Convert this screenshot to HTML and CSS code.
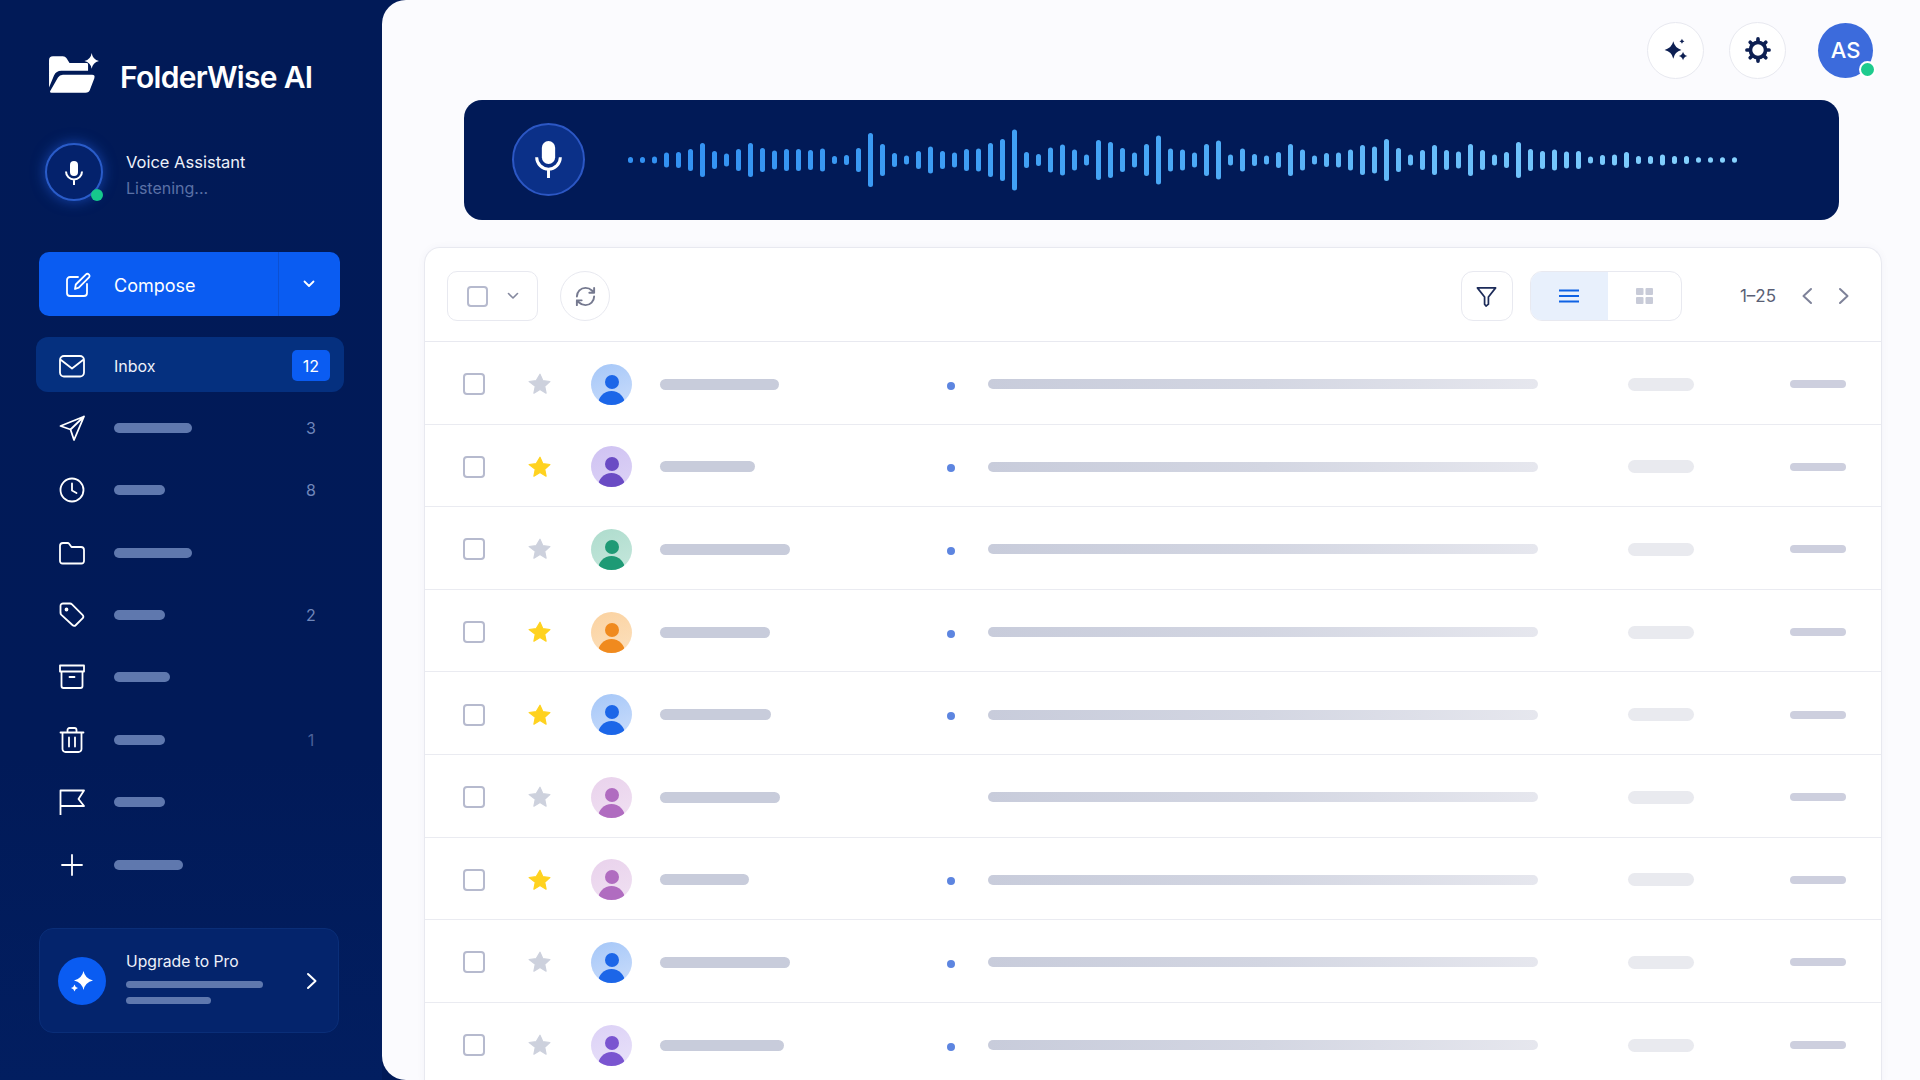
FILE: index.html
```html
<!DOCTYPE html>
<html lang="en">
<head>
<meta charset="utf-8">
<title>FolderWise AI</title>
<link rel="stylesheet" href="styles.css">
</head>
<body>
<svg class="defs" aria-hidden="true"><symbol id="star" viewBox="0 0 24 24"><path d="M12 2.2l2.9 6.5 7 .8-5.2 4.7 1.4 7-6.1-3.6-6.1 3.6 1.4-7L1.100 9.500l7-.8z" stroke="currentColor" stroke-width="1.200" stroke-linejoin="round" fill="currentColor"/></symbol></svg>
<aside class="sidebar">
  <div class="brand">
    <svg class="brand-icon" viewBox="145 155 160 130"><path fill="#fff" d="M148 180Q148 168 160 168H190Q197 168 201 174L210 188H262Q266 188 266 192V212H185Q170 212 163 226L148 262Z"/><path fill="#fff" d="M190 224H278Q288 224 285 234L272 268Q269 278 258 278H155Q149 278 152 272L175 232Q180 224 190 224Z"/><path fill="#fff" d="M277 158Q280 178 299 182Q280 186 277 206Q274 186 255 182Q274 178 277 158Z"/></svg>
    <span class="brand-name">FolderWise AI</span>
  </div>
  <div class="voice">
    <div class="voice-orb">
      <svg class="mic-sm" viewBox="3 0 18 25"><rect x="8" y="1" width="8" height="15" rx="4" fill="#fff"/><path d="M4 11.500a8 8 0 0 0 16 0M12 19.500V25" fill="none" stroke="#fff" stroke-width="2"/></svg>
      <span class="orb-dot"></span>
    </div>
    <div class="voice-text"><div class="voice-title">Voice Assistant</div><div class="voice-sub">Listening...</div></div>
  </div>
  <div class="compose">
    <div class="compose-main">
      <svg class="ico" viewBox="0 0 26 26"><path d="M13 5H5a3 3 0 0 0-3 3v13a3 3 0 0 0 3 3h14a3 3 0 0 0 3-3v-9"/><path d="M10 17l.8-4.500L21 2.300a1.900 1.900 0 0 1 2.700 0l.3.300a1.900 1.900 0 0 1 0 2.700L13.800 15.600z"/></svg>
      <span>Compose</span>
    </div>
    <div class="compose-more"><svg class="chev" viewBox="0 0 12 8"><path d="M1.500 1.500L6 6l4.500-4.500"/></svg></div>
  </div>
  <nav class="nav">
    <div class="nav-item active">
      <svg class="ico" viewBox="0 0 26 26"><rect x="1" y="3" width="24" height="20.500" rx="4"/><path d="M2 7l11 8.500L24 7"/></svg>
      <span class="nav-label">Inbox</span><span class="badge">12</span>
    </div>
    <div class="nav-item">
      <svg class="ico" viewBox="0 0 26 26"><path d="M1.500 11L25 1.500 15 25l-3.500-10.500zM11.500 14.500L25 1.500"/></svg>
      <span class="bar w78"></span><span class="count">3</span>
    </div>
    <div class="nav-item">
      <svg class="ico" viewBox="0 0 26 26"><circle cx="13" cy="13" r="11.500"/><path d="M13 6.500V13.500l4.500 2.500"/></svg>
      <span class="bar w51"></span><span class="count">8</span>
    </div>
    <div class="nav-item">
      <svg class="ico" viewBox="0 0 26 26"><path d="M1 6a3 3 0 0 1 3-3h4.500a2 2 0 0 1 1.600.8L12.500 7H22a3 3 0 0 1 3 3v11a2.500 2.500 0 0 1-2.500 2.500h-19A2.500 2.500 0 0 1 1 21z"/></svg>
      <span class="bar w78"></span>
    </div>
    <div class="nav-item">
      <svg class="ico" viewBox="0 0 26 26"><path d="M1.500 4a2.500 2.500 0 0 1 2.500-2.500h7a3 3 0 0 1 2 .9l10.500 10.500a2.500 2.500 0 0 1 0 3.500l-6.600 6.600a2.500 2.500 0 0 1-3.500 0L2.400 12.900a3 3 0 0 1-.9-2z"/><circle cx="7.500" cy="7.500" r="1" fill="#fff"/></svg>
      <span class="bar w51"></span><span class="count">2</span>
    </div>
    <div class="nav-item">
      <svg class="ico" viewBox="0 0 26 26"><path d="M1 1.500h24v6H1zM2.500 7.500V22a2 2 0 0 0 2 2h17a2 2 0 0 0 2-2V7.500M10.500 13h5"/></svg>
      <span class="bar w56"></span>
    </div>
    <div class="nav-item">
      <svg class="ico" viewBox="0 0 26 26"><path d="M1.500 5.500h23M8.500 5.500V3a2 2 0 0 1 2-2h5a2 2 0 0 1 2 2v2.500M3.500 5.500V22a3 3 0 0 0 3 3h13a3 3 0 0 0 3-3V5.500M10 10.500v9M16 10.500v9"/></svg>
      <span class="bar w51"></span><span class="count dim">1</span>
    </div>
    <div class="nav-item">
      <svg class="ico" viewBox="0 0 26 26"><path d="M1.500 26V1.500H25l-5.500 8.500L25 17H1.500"/></svg>
      <span class="bar w51"></span>
    </div>
    <div class="nav-item">
      <svg class="ico" viewBox="0 0 26 26"><path d="M13 3v20M3 13h20"/></svg>
      <span class="bar w69"></span>
    </div>
  </nav>
  <div class="upgrade">
    <div class="up-orb"><svg class="up-star" viewBox="0 0 24 24"><path fill="#fff" d="M13.500 2q1.500 7.500 9.500 9.500-8 2-9.500 9.500-1.500-7.500-9.500-9.500 8-2 9.500-9.500zM4.500 15.500q.6 3 3.500 3.500-2.900.6-3.500 3.500Q3.900 19.600 1 19q2.900-.5 3.500-3.500z"/></svg></div>
    <div class="up-text">
      <div class="up-title">Upgrade to Pro</div>
      <div class="up-bar one"></div>
      <div class="up-bar two"></div>
    </div>
    <svg class="up-chev" viewBox="0 0 12 18"><path d="M2 2l7.500 7L2 16"/></svg>
  </div>
</aside>
<main class="main">
  <div class="top">
    <div class="round">
      <svg class="top-ico" viewBox="0 0 24 24"><path fill="#0d1f52" d="M9.500 4q1.300 6 7.500 8-6.200 1.500-7.500 8Q8.200 13.500 1.500 12 8.200 10 9.500 4zM18.500 13.500q.7 3.100 4 4-3.300.8-4 4-.7-3.200-4-4 3.300-.9 4-4zM17.500 1.500q.4 1.900 2.300 2.400-1.900.5-2.300 2.400-.4-1.900-2.300-2.400 1.900-.5 2.300-2.400z"/></svg>
    </div>
    <div class="round gear">
      <svg class="top-ico" viewBox="0 0 24 24"><path fill="none" stroke="#0d1f52" stroke-width="3.400" d="M12 5a7 7 0 1 0 0 14 7 7 0 0 0 0-14z"/><path fill="none" stroke="#0d1f52" stroke-width="3.400" stroke-linecap="round" d="M12 1.800v2M12 20.200v2M1.800 12h2M20.200 12h2M4.800 4.800l1.400 1.400M17.800 17.800l1.400 1.400M4.800 19.200l1.400-1.400M17.800 6.200l1.400-1.400"/></svg>
    </div>
    <div class="me">AS<span class="me-dot"></span></div>
  </div>
  <section class="wavebar">
    <div class="wave-orb"><svg class="mic-lg" viewBox="3 0 18 25"><rect x="7.500" y="0" width="9" height="15.500" rx="4.500" fill="#fff"/><path d="M4 11a8 8 0 0 0 16 0M12 19V25" fill="none" stroke="#fff" stroke-width="2"/></svg></div>
    <svg class="wave" viewBox="0 0 1110 70">
      <defs><linearGradient id="wg" gradientUnits="userSpaceOnUse" x1="0" y1="0" x2="1110" y2="0"><stop offset="0" stop-color="#3190f2"/><stop offset=".45" stop-color="#45a5f5"/><stop offset="1" stop-color="#88d4ff"/></linearGradient></defs>
      <path fill="none" stroke="url(#wg)" stroke-width="5" stroke-linecap="round" d="M2.500 34.500v1M14.500 34.500v1M26.500 34v2M38.500 30v10M50.500 29.500v11M62.500 26.500v17M74.500 20.500v29M86.500 28.500v13M98.500 31v8M110.500 26.500v17M122.500 20.500v29M134.500 25.500v19M146.500 28v14M158.500 26.500v17M170.500 26.500v17M182.500 27.500v15M194.500 26v18M206.500 33.500v3M218.500 32.500v5M230.500 25.500v19M242.500 10.500v49M254.500 21.500v27M266.500 30.500v9M278.500 33v4M290.500 28.500v13M302.500 24v22M314.500 28.500v13M326.500 30v10M338.500 26.500v17M350.500 26v18M362.500 20.500v29M374.500 16.500v37M386.500 7v56M398.500 29.500v11M410.500 31.500v7M422.500 25v20M434.500 22v26M446.500 27v16M458.500 32v6M470.500 17.500v35M482.500 19.500v31M494.500 25.500v19M506.500 30v10M518.500 21.500v27M530.500 13v44M542.500 26v18M554.500 27v16M566.500 30v10M578.500 21.500v27M590.500 18v34M602.500 32v6M614.500 26v18M626.500 31.500v7M638.500 33v4M650.500 29.500v11M662.500 21.500v27M674.500 27v16M686.500 33v4M698.500 30.500v9M710.500 30v10M722.500 27v16M734.500 22.500v25M746.500 24v22M758.500 16.500v37M770.500 25.500v19M782.500 32v6M794.500 27.500v15M806.500 22.500v25M818.500 27.500v15M830.500 29v12M842.500 21.500v27M854.500 27.500v15M866.500 32v6M878.500 29.500v11M890.500 19.500v31M902.500 26.500v17M914.500 28.500v13M926.500 27v16M938.500 29v12M950.500 28.500v13M962.500 34v2M974.500 32.500v5M986.500 32v6M998.500 29.500v11M1010.500 33.500v3M1022.500 33.500v3M1034.500 32v6M1046.500 33.500v3M1058.500 33.500v3M1070.500 34.800v.4M1082.500 34.800v.4M1094.500 34.800v.4M1106.500 34.800v.4"/>
    </svg>
  </section>
  <section class="card">
    <div class="toolbar">
      <div class="select"><span class="box"></span><svg class="mini-chev" viewBox="0 0 12 8"><path d="M1.500 1.500L6 6l4.500-4.500"/></svg></div>
      <div class="refresh"><svg class="refresh-ico" viewBox="0 0 24 24"><path d="M3 12a9 9 0 0 1 9-9 9.750 9.750 0 0 1 6.740 2.740L21 8M21 3v5h-5M21 12a9 9 0 0 1-9 9 9.750 9.750 0 0 1-6.740-2.740L3 16M8 16H3v5"/></svg></div>
      <div class="spacer"></div>
      <div class="filter"><svg class="filter-ico" viewBox="0 0 24 24"><path d="M2.500 3h19l-7.500 9.500V20l-2.500 2H11.500L10 20v-7.500z"/></svg></div>
      <div class="toggle">
        <div class="seg on"><svg class="seg-ico" viewBox="0 0 20 14"><path d="M0 1.500h20M0 7h20M0 12.500h20"/></svg></div>
        <div class="seg"><svg class="seg-grid" viewBox="0 0 17 16"><rect width="7.500" height="7" rx="1"/><rect x="9.500" width="7.500" height="7" rx="1"/><rect y="9" width="7.500" height="7" rx="1"/><rect x="9.500" y="9" width="7.500" height="7" rx="1"/></svg></div>
      </div>
      <span class="range">1–25</span>
      <svg class="pg first" viewBox="0 0 12 18"><path d="M10 2L2.500 9l7.500 7"/></svg>
      <svg class="pg" viewBox="0 0 12 18"><path d="M2 2l7.500 7L2 16"/></svg>
    </div>
    <div class="row"><span class="box cb"></span><svg class="star"><use href="#star"/></svg><div class="av blue"></div><div class="name n119"></div><span class="dot"></span><div class="long"></div><div class="pill"></div><div class="end"></div></div>
    <div class="row"><span class="box cb"></span><svg class="star gold"><use href="#star"/></svg><div class="av purple"></div><div class="name n95"></div><span class="dot"></span><div class="long"></div><div class="pill"></div><div class="end"></div></div>
    <div class="row"><span class="box cb"></span><svg class="star"><use href="#star"/></svg><div class="av green"></div><div class="name n130"></div><span class="dot"></span><div class="long"></div><div class="pill"></div><div class="end"></div></div>
    <div class="row"><span class="box cb"></span><svg class="star gold"><use href="#star"/></svg><div class="av orange"></div><div class="name n110"></div><span class="dot"></span><div class="long"></div><div class="pill"></div><div class="end"></div></div>
    <div class="row"><span class="box cb"></span><svg class="star gold"><use href="#star"/></svg><div class="av blue"></div><div class="name n111"></div><span class="dot"></span><div class="long"></div><div class="pill"></div><div class="end"></div></div>
    <div class="row"><span class="box cb"></span><svg class="star"><use href="#star"/></svg><div class="av pink"></div><div class="name n120"></div><span class="dot none"></span><div class="long"></div><div class="pill"></div><div class="end"></div></div>
    <div class="row"><span class="box cb"></span><svg class="star gold"><use href="#star"/></svg><div class="av pink"></div><div class="name n89"></div><span class="dot"></span><div class="long"></div><div class="pill"></div><div class="end"></div></div>
    <div class="row"><span class="box cb"></span><svg class="star"><use href="#star"/></svg><div class="av blue"></div><div class="name n130"></div><span class="dot"></span><div class="long"></div><div class="pill"></div><div class="end"></div></div>
    <div class="row"><span class="box cb"></span><svg class="star"><use href="#star"/></svg><div class="av violet"></div><div class="name n124"></div><span class="dot"></span><div class="long"></div><div class="pill"></div><div class="end"></div></div>
  </section>
</main>
</body>
</html>
```
FILE: styles.css
```css
* { box-sizing: border-box; }
html, body { margin: 0; height: 100%; overflow: hidden; }
body {
  display: flex;
  background: #011a57;
  font-family: Inter, "Noto Sans", sans-serif;
}
.defs { width: 0; height: 0; position: absolute; }

/* sidebar */
.sidebar {
  width: 382px;
  flex: none;
  height: 1080px;
  padding: 52px 42px 0 39px;
  background: linear-gradient(180deg, #011a57 0%, #011a58 70%, #021e60 100%);
}
.brand { display: flex; align-items: center; height: 43px; margin-left: 9px; }
.brand-icon { width: 53px; height: 43px; flex: none; }
.brand-name {
  margin-left: 19px;
  margin-top: 6px;
  font-size: 30px;
  font-weight: 600;
  letter-spacing: -0.7px;
  color: #fff;
}
.voice { display: flex; align-items: center; margin: 48px 0 0 6px; height: 58px; }
.voice-orb {
  position: relative;
  width: 58px;
  height: 58px;
  border-radius: 50%;
  border: 2px solid #2a5cc9;
  background: #04226c;
  box-shadow: 0 0 14px rgba(42, 104, 240, .55);
  display: flex;
  align-items: center;
  justify-content: center;
}
.mic-sm { width: 18px; height: 25px; }
.orb-dot {
  position: absolute;
  right: -2px;
  bottom: -2px;
  width: 12px;
  height: 12px;
  border-radius: 50%;
  background: #16c88c;
}
.voice-text { margin-left: 23px; padding-top: 5px; }
.voice-title { font-size: 16.500px; line-height: 20px; color: #eef1fa; }
.voice-sub { font-size: 16px; line-height: 20px; margin-top: 6px; color: #5b71a6; }

.compose {
  display: flex;
  width: 301px;
  height: 64px;
  margin-top: 51px;
  border-radius: 10px;
  background: #0a5cf2;
  color: #fff;
  font-size: 18px;
}
.compose-main {
  width: 240px;
  display: flex;
  align-items: center;
  gap: 23px;
  padding: 2px 0 0 26px;
  border-right: 1px solid #0c50d2;
}
.compose-more { flex: 1; display: flex; align-items: center; justify-content: center; }
.chev { width: 12px; height: 8px; fill: none; stroke: #fff; stroke-width: 1.800; stroke-linecap: round; stroke-linejoin: round; margin-left: -2px; }
.ico { width: 26px; height: 26px; flex: none; fill: none; stroke: #fff; stroke-width: 1.800; stroke-linecap: round; stroke-linejoin: round; }

.nav { display: flex; flex-direction: column; gap: 7.400px; margin: 21px -4px 0 -3px; width: 308px; }
.nav-item {
  display: flex;
  align-items: center;
  height: 55px;
  padding: 2px 14px 0 23px;
  border-radius: 12px;
  color: #eef1fa;
  font-size: 16px;
}
.nav-item.active { background: #05307f; }
.nav-item .ico { margin-right: 29px; }
.nav-label { flex: 1; }
.bar { display: block; height: 10px; border-radius: 5px; background: #5f78ae; }
.w78 { width: 78px; }
.w51 { width: 51px; }
.w56 { width: 56px; }
.w69 { width: 69px; }
.badge {
  width: 38px;
  height: 31px;
  border-radius: 5px;
  background: #0a5cf2;
  color: #fff;
  font-size: 16px;
  display: flex;
  align-items: center;
  justify-content: center;
}
.count { margin-left: auto; width: 38px; text-align: center; font-size: 16px; color: #6f86ba; }
.count.dim { color: #4b6198; }

.upgrade {
  display: flex;
  align-items: center;
  width: 300px;
  height: 105px;
  margin-top: 37px;
  padding: 0 20px 0 18px;
  border-radius: 14px;
  background: #04246c;
  border: 1px solid #0a2e78;
}
.up-orb {
  width: 48px;
  height: 48px;
  flex: none;
  border-radius: 50%;
  background: #0a5cf2;
  display: flex;
  align-items: center;
  justify-content: center;
}
.up-star { width: 24px; height: 24px; }
.up-text { margin-left: 20px; flex: 1; }
.up-title { font-size: 15.700px; line-height: 20px; color: #eef1fa; margin-top: -5px; }
.up-bar { border-radius: 4px; background: #5f78ae; }
.up-bar.one { width: 137px; height: 7px; margin-top: 9px; }
.up-bar.two { width: 85px; height: 7px; margin-top: 9px; }
.up-chev { width: 12px; height: 18px; flex: none; fill: none; stroke: #fff; stroke-width: 2; stroke-linecap: round; stroke-linejoin: round; }

/* main */
.main {
  flex: 1;
  height: 1080px;
  overflow: hidden;
  background: #fbfbfe;
  border-radius: 24px 0 0 24px;
}
.top { display: flex; align-items: center; height: 100px; padding: 0 47px 0 0; justify-content: flex-end; }
.round {
  width: 57px;
  height: 57px;
  border-radius: 50%;
  background: #fff;
  border: 1px solid #e8e9f0;
  display: flex;
  align-items: center;
  justify-content: center;
  margin-right: 25px;
}
.round.gear { margin-right: 32px; }
.top-ico { width: 26px; height: 26px; }
.me {
  position: relative;
  width: 55px;
  height: 55px;
  border-radius: 50%;
  background: #3c6bdc;
  color: #fff;
  font-size: 22px;
  font-weight: 500;
  display: flex;
  align-items: center;
  justify-content: center;
}
.me-dot {
  position: absolute;
  right: -3px;
  bottom: 0;
  width: 17px;
  height: 17px;
  border-radius: 50%;
  background: #1ecb8e;
  border: 2.500px solid #fff;
}
.wavebar {
  display: flex;
  align-items: center;
  width: 1375px;
  height: 120px;
  margin-left: 82px;
  padding-left: 48px;
  border-radius: 18px;
  background: #011a57;
}
.wave-orb {
  width: 73px;
  height: 73px;
  flex: none;
  margin-top: -1px;
  border-radius: 50%;
  background: #0b3088;
  border: 2px solid #2c57c4;
  display: flex;
  align-items: center;
  justify-content: center;
}
.mic-lg { width: 27px; height: 37px; }
.wave { width: 1110px; height: 70px; margin-left: 43px; flex: none; }

.card {
  width: 1458px;
  margin: 27px 38px 0 42px;
  background: #fff;
  border: 1.500px solid #e8e9f0;
  border-bottom: 0;
  border-radius: 16px 16px 0 0;
  box-shadow: 0 0 8px rgba(40, 50, 110, .04);
}
.toolbar {
  display: flex;
  align-items: center;
  height: 94px;
  padding: 3px 31px 0 22px;
  border-bottom: 1.500px solid #e8e9f0;
}
.select {
  width: 91px;
  height: 50px;
  display: flex;
  align-items: center;
  padding-left: 19px;
  border: 1px solid #e8e9f0;
  border-radius: 10px;
}
.box { display: block; width: 21px; height: 21px; flex: none; border: 2px solid #b6bace; border-radius: 4px; background: #fff; }
.mini-chev { width: 12px; height: 8px; margin-left: 19px; fill: none; stroke: #85899f; stroke-width: 1.600; stroke-linecap: round; stroke-linejoin: round; }
.refresh {
  width: 50px;
  height: 50px;
  margin-left: 22px;
  border-radius: 50%;
  border: 1px solid #e8e9f0;
  display: flex;
  align-items: center;
  justify-content: center;
}
.refresh-ico { width: 23px; height: 23px; fill: none; stroke: #75798f; stroke-width: 2; stroke-linecap: round; stroke-linejoin: round; }
.spacer { flex: 1; }
.filter {
  width: 52px;
  height: 50px;
  border-radius: 12px;
  border: 1px solid #e8e9f0;
  display: flex;
  align-items: center;
  justify-content: center;
}
.filter-ico { width: 23px; height: 23px; fill: none; stroke: #1c2b59; stroke-width: 1.800; stroke-linejoin: round; }
.toggle {
  display: flex;
  width: 152px;
  height: 50px;
  margin-left: 17px;
  border-radius: 12px;
  border: 1px solid #e8e9f0;
  overflow: hidden;
}
.seg { flex: 1; display: flex; align-items: center; justify-content: center; }
.seg.on { background: #e8f0fc; flex: none; width: 77px; }
.seg-ico { width: 20px; height: 14px; fill: none; stroke: #0f62e4; stroke-width: 2.200; }
.seg-grid { width: 17px; height: 16px; fill: #c8cbd8; }
.range { margin-left: 58px; font-size: 17px; color: #5a5f75; }
.pg { width: 12px; height: 18px; fill: none; stroke: #7e8299; stroke-width: 2; stroke-linecap: round; stroke-linejoin: round; margin-left: 25px; }
.pg.first { margin-left: 25px; }

.row {
  display: flex;
  align-items: center;
  height: 82.600px;
  padding: 3px 0 0 38px;
  border-bottom: 1.500px solid #eaebf1;
}
.cb { width: 22px; height: 22px; }
.star { width: 24px; height: 24px; margin-left: 43px; color: #cdd1dd; flex: none; }
.star.gold { color: #ffd21f; }
.av {
  position: relative;
  width: 41px;
  height: 41px;
  flex: none;
  margin-left: 39px;
  border-radius: 50%;
  overflow: hidden;
}
.av::before, .av::after { content: ""; position: absolute; border-radius: 50%; background: var(--fg); }
.av::before { width: 14px; height: 14px; left: 13.500px; top: 11px; }
.av::after { width: 27px; height: 27px; left: 7px; top: 27px; }
.blue { --fg: #1c66e8; background: linear-gradient(160deg, #a5c7f8, #c9dcfb); }
.purple { --fg: #6a4bc4; background: linear-gradient(160deg, #cfc2f2, #dcd2f6); }
.green { --fg: #1e9a75; background: linear-gradient(160deg, #aedccd, #c5e7dc); }
.orange { --fg: #f08a1e; background: linear-gradient(160deg, #fbd2a0, #fce0bd); }
.pink { --fg: #b06cc0; background: linear-gradient(160deg, #e9d2ec, #f0e0f2); }
.violet { --fg: #7a55d0; background: linear-gradient(160deg, #dcd1f6, #e8e1f9); }
.name { width: 287px; margin-left: 28px; flex: none; height: 11px; position: relative; }
.name::before { content: ""; position: absolute; inset: 0 auto 0 0; width: var(--w); border-radius: 6px; background: #c8ccdb; }
.n119 { --w: 119px; }
.n95 { --w: 95px; }
.n130 { --w: 130px; }
.n110 { --w: 110px; }
.n111 { --w: 111px; }
.n120 { --w: 120px; }
.n89 { --w: 89px; }
.n124 { --w: 124px; }
.dot { width: 8px; height: 8px; flex: none; border-radius: 50%; background: #5d85e0; margin-top: 3px; }
.dot.none { background: transparent; }
.long { width: 550px; margin-left: 33px; flex: none; height: 10px; border-radius: 5px; background: linear-gradient(90deg, #c8ccdb 0%, #d3d6e2 50%, #e6e7ee 100%); }
.pill { width: 66px; margin-left: 90px; flex: none; height: 13px; border-radius: 7px; background: #e9eaef; }
.end { width: 56px; margin-left: 96px; flex: none; height: 8px; border-radius: 4px; background: #cdcfde; }
```
